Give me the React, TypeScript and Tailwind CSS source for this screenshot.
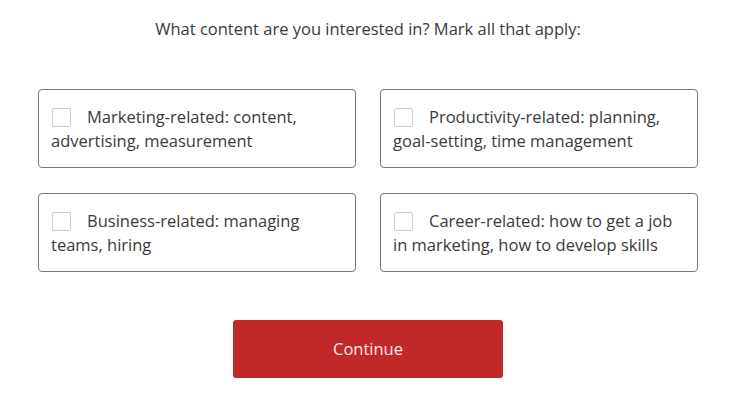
import React, { useState } from "react";

const options = [
  "Marketing-related: content, advertising, measurement",
  "Productivity-related: planning, goal-setting, time management",
  "Business-related: managing teams, hiring",
  "Career-related: how to get a job in marketing, how to develop skills",
];

export default function App() {
  const [checked, setChecked] = useState<boolean[]>([false, false, false, false]);

  return (
    <div
      className="w-[750px] h-[405px] bg-white text-[#3a3a3a]"
      style={{ fontFamily: '"Open Sans", sans-serif' }}
    >
      <div className="ml-[38px] w-[660px] pt-[17px]">
        <p className="text-center text-[16.5px] leading-[24px]">
          What content are you interested in? Mark all that apply:
        </p>

        <div className="grid grid-cols-2 gap-x-[24px] gap-y-[25px] mt-[48px]">
          {options.map((label, i) => (
            <label
              key={label}
              className="block h-[79px] border border-[#777] rounded-[4px] pl-[12px] pr-[10px] pt-[15px] text-[16.5px] leading-[23.5px] cursor-pointer"
            >
              <span
                onClick={() =>
                  setChecked((c) => c.map((v, j) => (j === i ? !v : v)))
                }
                className={`inline-block w-[19px] h-[19px] align-[-4px] mr-[16px] ml-[1px] border rounded-[2px] ${
                  checked[i] ? "bg-[#c0282a] border-[#c0282a]" : "border-[#ccc] bg-white"
                }`}
              />
              {label}
            </label>
          ))}
        </div>

        <div className="flex justify-center mt-[48px]">
          <button className="w-[270px] h-[58px] bg-[#c0282a] rounded-[3px] text-[16.5px] text-[#fbeaea]">
            Continue
          </button>
        </div>
      </div>
    </div>
  );
}
